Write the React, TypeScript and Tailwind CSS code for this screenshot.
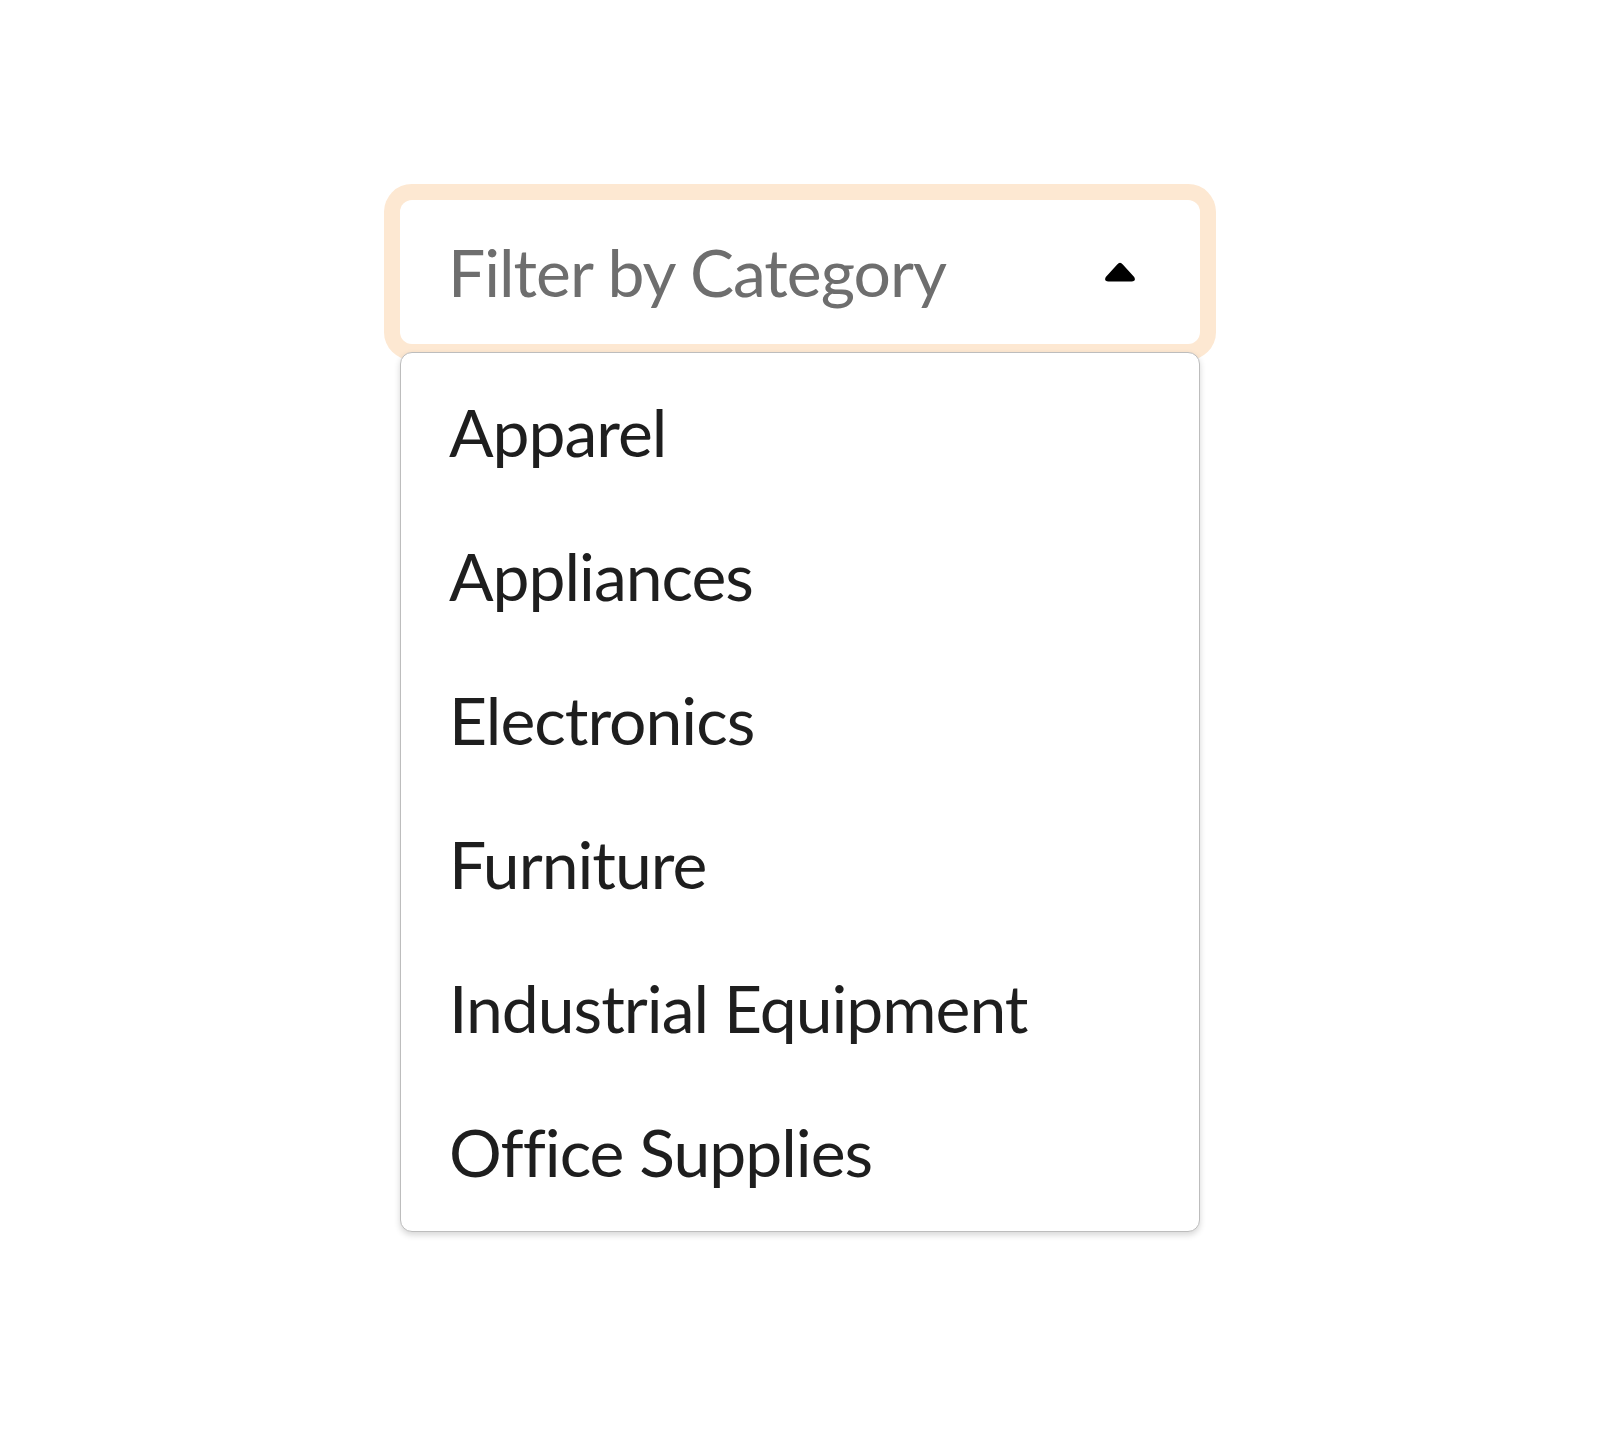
import { useState } from 'react'

const categories = [
  'Apparel',
  'Appliances',
  'Electronics',
  'Furniture',
  'Industrial Equipment',
  'Office Supplies',
]

function CaretUp() {
  return (
    <svg width="32" height="20" viewBox="0 0 32 20" aria-hidden="true">
      <path
        d="M13.2 2.4 Q16 -0.8 18.8 2.4 L30.2 15 Q32.4 19.4 27.6 19.4 L4.4 19.4 Q-0.4 19.4 1.8 15 Z"
        fill="#000"
      />
    </svg>
  )
}

export default function App() {
  const [open] = useState(true)

  return (
    <div
      className="flex min-h-[1432px] w-full justify-center bg-white pt-[200px]"
      style={{ fontFamily: 'Lato, "Noto Sans", sans-serif' }}
    >
      <div className="relative h-[144px] w-[800px]">
        <button
          type="button"
          className="flex h-[144px] w-full items-center justify-between rounded-[12px] bg-white pl-[48px] pr-[64px] shadow-[0_0_0_16px_#fde8d2] outline-none"
        >
          <span className="text-[66px] leading-none tracking-[-1px] text-[#6e6e6e]">
            Filter by Category
          </span>
          <CaretUp />
        </button>

        {open && (
          <ul
            role="listbox"
            className="absolute left-0 top-[152px] z-10 w-full rounded-[12px] border border-[#bdbdbd] bg-white py-[7px] shadow-[0_3px_6px_rgba(0,0,0,0.16)]"
          >
            {categories.map((c) => (
              <li
                key={c}
                role="option"
                className="flex h-[144px] items-center px-[48px] text-[66px] leading-none tracking-[-1px] text-[#1e1e1e]"
              >
                {c}
              </li>
            ))}
          </ul>
        )}
      </div>
    </div>
  )
}
